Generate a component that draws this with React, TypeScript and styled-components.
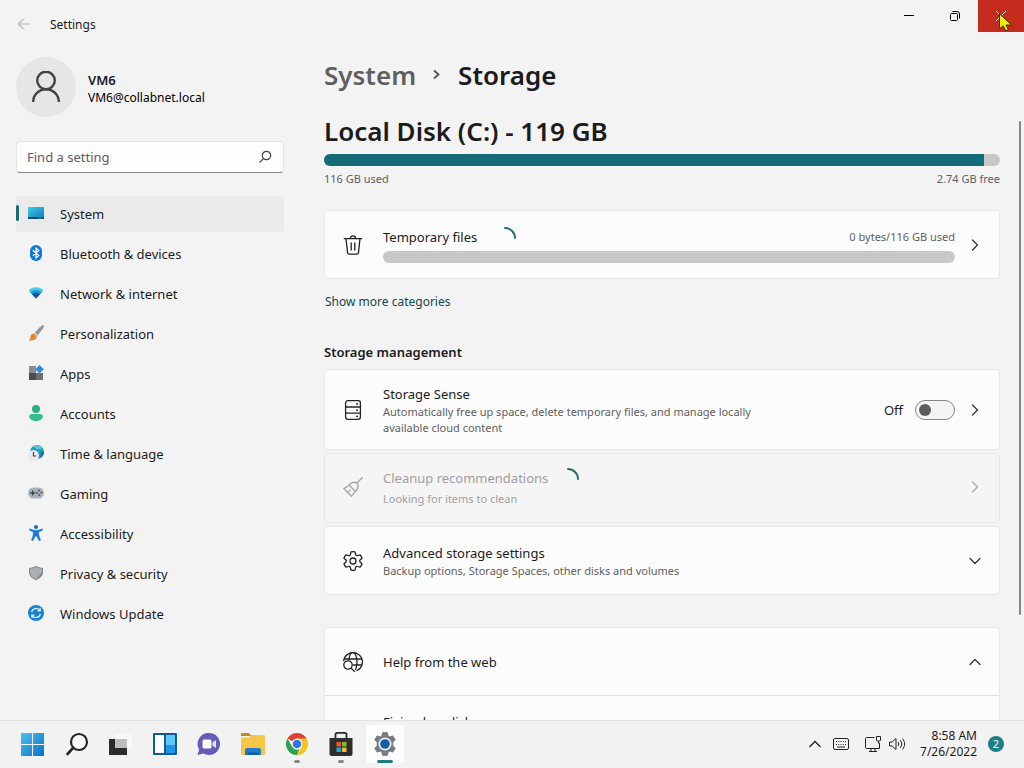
import React from "react";
import styled, { createGlobalStyle } from "styled-components";

const GlobalStyle = createGlobalStyle`
  *, *::before, *::after { box-sizing: border-box; }
  html, body { margin: 0; height: 100%; }
  body {
    background: #f3f3f3;
    color: #1b1b1b;
    font-family: "Noto Sans", "Open Sans", sans-serif;
    font-size: 13px;
    line-height: 20px;
    overflow: hidden;
  }
  h1, h2, h3, p { margin: 0; }
  button, input { font: inherit; color: inherit; }
  button { border: 0; padding: 0; background: none; text-align: left; }
  svg { display: block; flex: none; }
`;

const Desktop = styled.div`
  height: 100vh;
  display: flex;
  flex-direction: column;
`;

const Window = styled.div`
  flex: 1;
  min-height: 0;
  display: flex;
  flex-direction: column;
  overflow: hidden;
`;

const TitleBar = styled.header`
  flex: none;
  height: 48px;
  display: flex;
  align-items: flex-start;
`;

const BackButton = styled.button`
  width: 16px;
  height: 48px;
  margin: 0 18px 0 16px;
  display: flex;
  align-items: center;
`;

const AppName = styled.span`
  flex: 1;
  font-size: 12px;
  line-height: 50px;
`;

const CaptionButton = styled.button<{ $danger?: boolean }>`
  position: relative;
  width: 46px;
  height: 32px;
  display: flex;
  align-items: center;
  justify-content: center;
  background: ${(p) => (p.$danger ? "#c42b1c" : "transparent")};
`;

const Pointer = styled.svg`
  position: absolute;
  left: 20px;
  top: 13px;
`;

const Body = styled.div`
  flex: 1;
  min-height: 0;
  display: flex;
`;

const Sidebar = styled.aside`
  flex: none;
  width: 308px;
  padding: 9px 24px 0 16px;
  display: flex;
  flex-direction: column;
`;

const Account = styled.div`
  display: flex;
  align-items: center;
  gap: 12px;
`;

const Avatar = styled.div`
  width: 60px;
  height: 60px;
  border-radius: 50%;
  background: #e6e6e6;
  display: flex;
  align-items: center;
  justify-content: center;
`;

const AccountText = styled.div`
  padding-top: 4px;
  line-height: 18px;
`;

const AccountName = styled.div`
  font-weight: 600;
`;

const AccountMail = styled.div`
  font-size: 12px;
  color: #000;
`;

const SearchBox = styled.label`
  height: 32px;
  margin: 24px 0 23px;
  padding: 0 11px 0 10px;
  display: flex;
  align-items: center;
  background: #fdfdfd;
  border: 1px solid #e5e5e5;
  border-bottom-color: #868686;
  border-radius: 4px;
`;

const SearchInput = styled.input`
  flex: 1;
  min-width: 0;
  padding: 0;
  border: 0;
  outline: 0;
  background: none;
  &::placeholder { color: #5f5f5f; opacity: 1; }
`;

const Nav = styled.nav`
  display: flex;
  flex-direction: column;
  gap: 4px;
`;

const NavItem = styled.a<{ $active?: boolean }>`
  height: 36px;
  padding-right: 12px;
  display: flex;
  align-items: center;
  border-radius: 4px;
  color: inherit;
  text-decoration: none;
  background: ${(p) => (p.$active ? "#eaeaea" : "transparent")};
  &::before {
    content: "";
    width: 3px;
    height: 16px;
    margin: 0 9px 2px 0;
    border-radius: 2px;
    background: ${(p) => (p.$active ? "#1a6a6c" : "transparent")};
  }
  svg { margin: 0 16px 2px 0; }
`;

const Content = styled.main`
  flex: 1;
  min-width: 0;
  padding: 7px 0 0 16px;
  display: flex;
  flex-direction: column;
`;

const Breadcrumb = styled.div`
  flex: none;
  display: flex;
  align-items: center;
  gap: 13px;
  font-size: 26px;
  font-weight: 600;
  line-height: 40px;
`;

const Crumb = styled.a`
  color: #5f5f5f;
  text-decoration: none;
`;

const PageTitle = styled.h1`
  font: inherit;
`;

const Page = styled.div`
  flex: 1;
  min-height: 0;
  overflow: hidden;
  padding: 16px 19px 0 0;
`;

const DriveTitle = styled.h2`
  font-size: 26px;
  font-weight: 600;
  line-height: 40px;
`;

const Meter = styled.div`
  height: 12px;
  margin-top: 3px;
  border-radius: 6px;
  background: #c8c8c8;
  overflow: hidden;
`;

const MeterFill = styled.div`
  height: 100%;
  background: #166b78;
`;

const Spread = styled.div`
  display: flex;
  justify-content: space-between;
  align-items: center;
`;

const Caption = styled.span<{ $faded?: boolean }>`
  display: block;
  max-width: 400px;
  font-size: 11px;
  line-height: 16px;
  color: ${(p) => (p.$faded ? "#a0a0a0" : "#606060")};
`;

const MeterLabels = styled(Spread)`
  margin: 5px 0 23px;
`;

const Card = styled.div<{ $faded?: boolean }>`
  width: 100%;
  min-height: ${(p) => (p.$faded ? 70 : 69)}px;
  padding: ${(p) => (p.$faded ? "12px 16px 14px 18px" : "13px 16px 13px 18px")};
  display: flex;
  align-items: center;
  gap: 20px;
  border: 1px solid #e7e7e7;
  border-radius: 4px;
  background: ${(p) => (p.$faded ? "#f5f5f5" : "#fcfcfc")};
  color: ${(p) => (p.$faded ? "#a0a0a0" : "inherit")};
`;

const CardText = styled.span<{ $loose?: boolean }>`
  flex: 1;
  min-width: 0;
  display: flex;
  flex-direction: column;
  gap: ${(p) => (p.$loose ? 3 : 0)}px;
`;

const CardTitle = styled.span<{ $gap?: number }>`
  display: flex;
  align-items: center;
  gap: ${(p) => p.$gap ?? 0}px;
  height: 20px;
`;

const CardEnd = styled.span`
  display: flex;
  align-items: center;
  gap: 12px;
`;

const WideCard = styled(Card)`
  gap: 12px;
  > svg:first-child { margin-right: 8px; }
  ${Meter} { margin-top: 4px; }
`;

const MoreLink = styled.a`
  display: inline-block;
  margin: 13px 1px 0;
  font-size: 12px;
  color: #14484c;
  text-decoration: none;
`;

const SectionTitle = styled.h3`
  margin: 30px 0 7px;
  font-size: 13px;
  font-weight: 600;
`;

const CardList = styled.div`
  display: flex;
  flex-direction: column;
  gap: 3px;
  ${Card}:first-child { min-height: 81px; }
`;

const SwitchLabel = styled.label`
  display: flex;
  align-items: center;
  gap: 12px;
`;

const Switch = styled.input`
  appearance: none;
  width: 40px;
  height: 20px;
  margin: 0;
  padding: 3px;
  border: 1px solid #868686;
  border-radius: 10px;
  background: #f4f4f4;
  &::before {
    content: "";
    display: block;
    width: 12px;
    height: 12px;
    border-radius: 50%;
    background: #5c5c5c;
  }
`;

const HelpGroup = styled.section`
  margin-top: 32px;
  border: 1px solid #e7e7e7;
  border-radius: 4px;
  background: #fcfcfc;
`;

const HelpHeader = styled.button`
  width: 100%;
  height: 68px;
  padding: 0 16px 0 18px;
  display: flex;
  align-items: center;
  gap: 20px;
  border-bottom: 1px solid #e0e0e0;
`;

const HelpLink = styled.a`
  display: block;
  padding: 16px 58px;
  color: inherit;
  text-decoration: none;
`;

const ScrollRow = styled.div`
  flex: 1;
  min-height: 0;
  display: flex;
`;

const ScrollThumb = styled.div`
  flex: none;
  width: 2px;
  height: 79%;
  margin: 26px 3px 0 0;
  border-radius: 1px;
  background: #868686;
`;

const Taskbar = styled.footer`
  flex: none;
  height: 48px;
  padding: 0 20px 2px 14px;
  display: flex;
  align-items: center;
  justify-content: space-between;
  border-top: 1px solid #e2e2e2;
  background: #f2f2f2;
`;

const TaskGroup = styled.div`
  display: flex;
  gap: 6px;
`;

const TaskButton = styled.button<{ $open?: boolean; $active?: boolean }>`
  position: relative;
  width: 38px;
  height: 38px;
  display: flex;
  align-items: center;
  justify-content: center;
  border-radius: 4px;
  background: ${(p) => (p.$active ? "#fdfdfd" : "transparent")};
  &::after {
    content: "";
    position: absolute;
    bottom: 0;
    width: ${(p) => (p.$active ? 16 : 6)}px;
    height: 3px;
    border-radius: 2px;
    background: ${(p) => (p.$active ? "#1f7a82" : p.$open ? "#8a8a8a" : "transparent")};
  }
`;

const Tray = styled.div`
  display: flex;
  align-items: center;
`;

const TrayButton = styled.button<{ $wide?: boolean }>`
  margin-right: ${(p) => (p.$wide ? 16 : 8)}px;
  display: flex;
  align-items: center;
`;

const Clock = styled.div`
  min-width: 56px;
  margin: 0 11px 0 7px;
  font-size: 12px;
  line-height: 16px;
  text-align: right;
`;

const Badge = styled.button`
  width: 16px;
  height: 16px;
  border-radius: 50%;
  background: #1f7f88;
  color: #fff;
  font-size: 11px;
  line-height: 16px;
  text-align: center;
`;

type ChevronDir = "right" | "down" | "up";
const chevronPaths: Record<ChevronDir, string> = {
  right: "M5.5 3 10.5 8 5.5 13",
  down: "M3 5.5 8 10.5 13 5.5",
  up: "M3 10.5 8 5.5 13 10.5",
};

const Chevron = ({ dir = "right", color = "#333" }: { dir?: ChevronDir; color?: string }) => (
  <svg width="16" height="16" viewBox="0 0 16 16" fill="none" stroke={color} strokeWidth="1.3" strokeLinecap="round" strokeLinejoin="round">
    <path d={chevronPaths[dir]} />
  </svg>
);

const CrumbChevron = () => (
  <svg width="16" height="16" viewBox="0 0 16 16" fill="none" stroke="#555" strokeWidth="1.8">
    <path d="M5 3.5 9.5 7.5 5 11.5" />
  </svg>
);

const Spinner = () => (
  <svg width="24" height="24" viewBox="0 0 24 24" fill="none" stroke="#24706c" strokeWidth="2" strokeLinecap="round">
    <path d="M12 3a10 10 0 0 1 10 10" />
  </svg>
);

const Line = ({ children, color = "#222" }: { children: React.ReactNode; color?: string }) => (
  <svg width="20" height="20" viewBox="0 0 20 20" fill="none" stroke={color} strokeWidth="1.3" strokeLinecap="round" strokeLinejoin="round">
    {children}
  </svg>
);

const TrashIcon = () => (
  <Line>
    <path d="M1.200 3.600h17.600M7.400 3.400a2.600 2.600 0 0 1 5.200 0M3 3.800l1.500 13.600a2 2 0 0 0 2 1.800h7a2 2 0 0 0 2-1.800L17 3.800M8.200 8v7M11.800 8v7" />
  </Line>
);

const DrivesIcon = () => (
  <Line>
    <rect x="2.600" y=".7" width="14.800" height="18.600" rx="2.200" />
    <path d="M2.600 7h14.800M2.600 13.200h14.800" />
    <path d="M14 4h.1M14 10.200h.1M14 16.400h.1" strokeWidth="1.800" />
  </Line>
);

const BroomIcon = () => (
  <Line color="#a3a3a3">
    <path d="M19.200.8 14 6M6.200 8.200C8.200 5.200 12 4.400 14 6.200s1.200 5.600-1.600 8.200zM6.200 8.200.8 11.600 8.400 19.200 12.400 14.400M4.600 15.400l2.600-2.200" />
  </Line>
);

const GearIcon = () => (
  <Line>
    <circle cx="10" cy="10" r="3" />
    <path d="M8 .9a9.300 9.300 0 0 1 4 0l.5 2.200a1.700 1.700 0 0 0 2.300 1.400l2.200-.7a9.300 9.300 0 0 1 2 3.400L17.300 8.800a1.700 1.700 0 0 0 0 2.400L19 12.800a9.300 9.300 0 0 1-2 3.400l-2.200-.7a1.700 1.700 0 0 0-2.300 1.400l-.5 2.200a9.300 9.300 0 0 1-4 0l-.5-2.200a1.700 1.700 0 0 0-2.300-1.400l-2.200.7a9.300 9.300 0 0 1-2-3.400l1.700-1.600a1.700 1.700 0 0 0 0-2.400L1 7.200a9.300 9.300 0 0 1 2-3.400l2.200.7a1.700 1.700 0 0 0 2.300-1.400z" />
  </Line>
);

const GlobeSearchIcon = () => (
  <Line>
    <path d="M.7 8.600A9.400 9.400 0 1 1 14 18.500M1.400 7h17.200M10.500 13h8.200M6 7.500C6.300 3.400 8 .6 10 .6s4 3.800 4 9.400c0 3-.4 5.500-1.300 7.300" />
    <circle cx="5" cy="13" r="4.200" />
    <path d="m8.200 16.200 3.400 3.400" />
  </Line>
);

const NavSvg = ({ children }: { children: React.ReactNode }) => (
  <svg width="16" height="16" viewBox="0 0 16 16">{children}</svg>
);

const navItems: { label: string; icon: React.ReactNode; active?: boolean }[] = [
  {
    label: "System",
    active: true,
    icon: (
      <NavSvg>
        <defs>
          <linearGradient id="sys" x1="0" y1="0" x2="1" y2="1">
            <stop stopColor="#38cdea" />
            <stop offset="1" stopColor="#1179b8" />
          </linearGradient>
        </defs>
        <rect y="2" width="16" height="12" rx="1" fill="url(#sys)" />
        <path d="M0 12h16v1a1 1 0 0 1-1 1H1a1 1 0 0 1-1-1z" fill="#0b4570" />
        <path d="M10.500 13h1M12.500 13h1" stroke="#8fd4f4" />
      </NavSvg>
    ),
  },
  {
    label: "Bluetooth & devices",
    icon: (
      <NavSvg>
        <rect x="2" width="12" height="16" rx="6" fill="#0f78dd" />
        <path d="m4.800 5.200 6 5.400L8 13V3l2.800 2.500-6 5.300" fill="none" stroke="#fff" strokeWidth="1.200" />
      </NavSvg>
    ),
  },
  {
    label: "Network & internet",
    icon: (
      <NavSvg>
        <path d="M.5 5.500C4.500 1.300 11.500 1.300 15.500 5.500L8 13.500z" fill="#50c9ec" />
        <path d="M2.200 7.300c3.300-3.200 8.300-3.200 11.600 0L8 13.500z" fill="#239bd3" />
        <path d="M4 9.300c2.400-2.200 5.600-2.200 8 0l-4 4.200z" fill="#1455a5" />
      </NavSvg>
    ),
  },
  {
    label: "Personalization",
    icon: (
      <NavSvg>
        <path d="M15.600.4c.8.9-.2 2.400-1.200 3.900L9 11.200 6 8.400 12.200 1.800C13.600.5 15-.2 15.600.4z" fill="#8a9aa0" />
        <path d="m7 7.400 2.900 2.700L8.700 11.500 5.800 8.700z" fill="#c9ccce" />
        <path d="M5.500 8.500 8.800 11.500c-.2 3-4 4.600-8.200 3.900 2-1.100 1.500-2.500 2-4.400.4-1.500 1.700-2.500 2.900-2.500z" fill="#e98526" />
      </NavSvg>
    ),
  },
  {
    label: "Apps",
    icon: (
      <NavSvg>
        <rect x="1" y="1" width="7" height="7" fill="#8a8d90" />
        <rect x="1" y="8" width="7" height="7" fill="#4a4c4f" />
        <rect x="8" y="8" width="7" height="7" fill="#6d7073" />
        <path d="m11.500 0 4.300 4.300-4.300 4.300-4.300-4.300z" fill="#2c8ddd" />
      </NavSvg>
    ),
  },
  {
    label: "Accounts",
    icon: (
      <NavSvg>
        <circle cx="8" cy="4" r="4" fill="#29ae83" />
        <path d="M3.500 9h9c1.300 0 2.300 1 2.300 2.300C14.800 14.500 11.500 16 8 16s-6.800-1.500-6.800-4.700C1.200 10 2.200 9 3.500 9z" fill="#35bd90" />
      </NavSvg>
    ),
  },
  {
    label: "Time & language",
    icon: (
      <NavSvg>
        <circle cx="9" cy="7" r="7" fill="#1f9dbb" />
        <path d="M5 1.500C8-.3 12-.3 14.500 3c-2 .5-2.500 1.500-4.500 1.500S7.500 3 5 1.500z" fill="#57c8d6" />
        <path d="M13 7l3-1c0 4-2 6-4 7z" fill="#1474ad" />
        <circle cx="5.500" cy="10.500" r="5.500" fill="#eee6ea" />
        <path d="M5.500 7v4H8" fill="none" stroke="#454a50" strokeWidth="1.200" />
      </NavSvg>
    ),
  },
  {
    label: "Gaming",
    icon: (
      <NavSvg>
        <rect y="2.500" width="16" height="11" rx="5.500" fill="#a9b0b8" />
        <path d="M2.200 8h5M4.700 5.500v5" stroke="#3c4148" strokeWidth="1.300" />
        <g fill="#4a5058">
          <circle cx="11" cy="5.500" r=".9" />
          <circle cx="13.400" cy="7.500" r=".9" />
          <circle cx="9" cy="8" r=".9" />
          <circle cx="11.200" cy="10" r=".9" />
        </g>
      </NavSvg>
    ),
  },
  {
    label: "Accessibility",
    icon: (
      <NavSvg>
        <circle cx="8" cy="2" r="2" fill="#1b6fc0" />
        <path d="M1.800 3.800 6 5.200h4l4.200-1.400.5 1.400-4 1.700.2 3.300 1.700 5-1.600.6L8.500 11h-1L5 15.800l-1.600-.6 1.700-5 .2-3.300-4-1.700z" fill="#1b7bd2" stroke="#1b7bd2" strokeWidth=".4" />
      </NavSvg>
    ),
  },
  {
    label: "Privacy & security",
    icon: (
      <NavSvg>
        <path d="M8 .8c2 1.400 4.500 2 7 2V7c0 4-3 6.500-7 8.200C4 13.500 1 11 1 7V2.800c2.500 0 5-.6 7-2z" fill="#84888b" />
        <path d="M8 2c1.800 1.200 4 1.700 6 1.700V7L8 14C4.500 12.500 2 10.400 2 7V3.700c2 0 4.200-.5 6-1.700z" fill="#abafb2" />
      </NavSvg>
    ),
  },
  {
    label: "Windows Update",
    icon: (
      <NavSvg>
        <circle cx="8" cy="8" r="8" fill="#1681d2" />
        <path d="M3.600 7A4.600 4.600 0 0 1 12 5.700M12.400 9A4.600 4.600 0 0 1 4 10.300M12.200 3.200v2.700H9.500M3.800 12.800v-2.700h2.700" fill="none" stroke="#dff3ff" strokeWidth="1.300" />
      </NavSvg>
    ),
  },
];

const StartIcon = () => (
  <svg width="24" height="24" viewBox="0 0 24 24">
    <defs>
      <linearGradient id="win" x1="0" y1="0" x2="24" y2="24" gradientUnits="userSpaceOnUse">
        <stop stopColor="#4cc2ee" />
        <stop offset="1" stopColor="#0b6fc9" />
      </linearGradient>
    </defs>
    <path d="M0 1h11v11H0zM12 1h11v11H12zM0 13h11v11H0zM12 13h11v11H12z" fill="url(#win)" />
  </svg>
);

const TaskSearchIcon = () => (
  <svg width="24" height="24" viewBox="0 0 24 24">
    <circle cx="14" cy="10" r="8" fill="#fafafa" stroke="#262626" strokeWidth="2.200" />
    <path d="m8 16-5.500 6" stroke="#262626" strokeWidth="2.600" strokeLinecap="round" />
  </svg>
);

const TaskViewIcon = () => (
  <svg width="24" height="24" viewBox="0 0 24 24">
    <rect x="6" y="2" width="17" height="14" rx="1" fill="#f8f8f8" />
    <path d="M0 7h18v16H1a1 1 0 0 1-1-1z" fill="#2b2b2b" />
    <rect x="6" y="7" width="12" height="9" fill="#bdbdbd" />
  </svg>
);

const WidgetsIcon = () => (
  <svg width="24" height="24" viewBox="0 0 24 24">
    <rect y="1" width="24" height="22" rx="1" fill="#155a92" />
    <rect x="2" y="3" width="9" height="18" fill="#fbfdff" />
    <rect x="13" y="3" width="9" height="10" fill="#5ccbfb" />
    <rect x="13" y="13" width="9" height="8" fill="#1e97ea" />
  </svg>
);

const ChatIcon = () => (
  <svg width="24" height="24" viewBox="0 0 24 24">
    <path d="M12 1A11 11 0 1 1 6.500 21.500L.5 23l1.600-5.500A11 11 0 0 1 12 1z" fill="#665bb9" />
    <rect x="5.500" y="7.500" width="9" height="9" rx="1.500" fill="#fff" />
    <path d="m15.500 10.500 3.500-2.500v8l-3.500-2.500z" fill="#e5e3fa" />
  </svg>
);

const FolderIcon = () => (
  <svg width="24" height="24" viewBox="0 0 24 24">
    <path d="M0 2a1 1 0 0 1 1-1h7l2.500 3H0z" fill="#c28b22" />
    <path d="M0 5.500h8L10.500 3H23a1 1 0 0 1 1 1v18a1 1 0 0 1-1 1H1a1 1 0 0 1-1-1z" fill="#f5c749" />
    <path d="M4 23v-4.500A2.500 2.500 0 0 1 6.500 16h11a2.500 2.500 0 0 1 2.500 2.500V23z" fill="#1e7bc9" />
    <path d="M6.500 20.500h11V23h-11z" fill="#125a9c" />
  </svg>
);

const ChromeIcon = () => (
  <svg width="24" height="24" viewBox="0 0 24 24">
    <path d="M12 12 2.470 6.500A11 11 0 0 1 21.530 6.500z" fill="#dc4334" />
    <path d="M12 6.500h9.530A11 11 0 0 1 12 23l4.800-8.300z" fill="#fbc116" />
    <path d="M2.470 6.500 7.200 14.800 12 17.500l2.500-.5L12 23A11 11 0 0 1 2.470 6.500z" fill="#2da24e" />
    <circle cx="12" cy="12" r="5.500" fill="#fff" />
    <circle cx="12" cy="12" r="4.300" fill="#2c78e4" />
  </svg>
);

const StoreIcon = () => (
  <svg width="24" height="24" viewBox="0 0 24 24">
    <path d="M6.500 7V2A1.500 1.500 0 0 1 8 .9h8A1.500 1.500 0 0 1 17.500 2v5" fill="none" stroke="#2b2b2b" strokeWidth="1.800" />
    <path d="M.5 6h23v16a2 2 0 0 1-2 2h-19a2 2 0 0 1-2-2z" fill="#2e2e2e" />
    <path d="M7.500 10H12v4.500H7.500z" fill="#ea5a32" />
    <path d="M13 10h4.500v4.500H13z" fill="#86b92f" />
    <path d="M7.500 15.500H12V20H7.500z" fill="#25a5e5" />
    <path d="M13 15.500h4.500V20H13z" fill="#f5bd2c" />
  </svg>
);

const TaskSettingsIcon = () => (
  <svg width="24" height="24" viewBox="0 0 24 24">
    <path
      d="M9.700.7h4.600l.7 3.200 1.800 1 3.100-1 2.300 4-2.400 2.100v4l2.400 2.100-2.300 4-3.100-1-1.800 1-.7 3.200H9.700L9 20.100l-1.800-1-3.100 1-2.300-4L4.200 14v-4L1.800 7.900l2.300-4 3.100 1 1.800-1z"
      fill="#777c82"
      stroke="#777c82"
      strokeLinejoin="round"
    />
    <circle cx="12" cy="12" r="6.500" fill="#eef4f9" />
    <circle cx="12" cy="12" r="4.800" fill="#125ea8" />
  </svg>
);

const tasks: { label: string; icon: React.ReactNode; open?: boolean; active?: boolean }[] = [
  { label: "Start", icon: <StartIcon /> },
  { label: "Search", icon: <TaskSearchIcon /> },
  { label: "Task view", icon: <TaskViewIcon /> },
  { label: "Widgets", icon: <WidgetsIcon /> },
  { label: "Chat", icon: <ChatIcon /> },
  { label: "File Explorer", icon: <FolderIcon /> },
  { label: "Chrome", icon: <ChromeIcon />, open: true },
  { label: "Microsoft Store", icon: <StoreIcon />, open: true },
  { label: "Settings", icon: <TaskSettingsIcon />, active: true },
];

const WindowTitleBar = () => (
  <TitleBar>
    <BackButton aria-label="Back">
      <svg width="16" height="16" viewBox="0 0 16 16" fill="none" stroke="#b8b8b8" strokeWidth="1.200">
        <path d="M14.500 8h-12M7.500 3 2.200 8l5.300 5" />
      </svg>
    </BackButton>
    <AppName>Settings</AppName>
    <CaptionButton aria-label="Minimize">
      <svg width="10" height="10" viewBox="0 0 10 10"><path d="M0 4h10v1H0z" /></svg>
    </CaptionButton>
    <CaptionButton aria-label="Restore">
      <svg width="10" height="10" viewBox="0 0 10 10" fill="none" stroke="#000">
        <rect x=".5" y="2.500" width="7" height="7" rx="1" />
        <path d="M2.500.5H7A2.500 2.500 0 0 1 9.500 3v4.500" />
      </svg>
    </CaptionButton>
    <CaptionButton $danger aria-label="Close">
      <svg width="10" height="10" viewBox="0 0 10 10" stroke="#fff"><path d="m0 0 10 10M10 0 0 10" /></svg>
      <Pointer width="16" height="19" viewBox="0 0 16 19">
        <path d="M1.500.8v15l3.600-3 2.600 5 2.600-1.300L8 12h5.500z" fill="#e6f400" stroke="#4a2a08" />
      </Pointer>
    </CaptionButton>
  </TitleBar>
);

const SettingsNav = () => (
  <Sidebar>
    <Account>
      <Avatar>
        <svg width="30" height="32" viewBox="0 0 30 32" fill="none" stroke="#444" strokeWidth="2.400">
          <circle cx="15" cy="9.500" r="8.800" />
          <path d="M2.200 31a12.800 12.800 0 0 1 25.600 0" />
        </svg>
      </Avatar>
      <AccountText>
        <AccountName>VM6</AccountName>
        <AccountMail>VM6@collabnet.local</AccountMail>
      </AccountText>
    </Account>
    <SearchBox>
      <SearchInput type="text" placeholder="Find a setting" aria-label="Find a setting" />
      <svg width="14" height="14" viewBox="0 0 14 14" fill="none" stroke="#444" strokeWidth="1.200">
        <circle cx="8.500" cy="5.500" r="4.200" />
        <path d="M5.400 8.600 1.500 12.500" />
      </svg>
    </SearchBox>
    <Nav>
      {navItems.map((item) => (
        <NavItem key={item.label} href="#" $active={item.active}>
          {item.icon}
          {item.label}
        </NavItem>
      ))}
    </Nav>
  </Sidebar>
);

const StoragePage = () => (
  <Content>
    <Breadcrumb>
      <Crumb href="#">System</Crumb>
      <CrumbChevron />
      <PageTitle>Storage</PageTitle>
    </Breadcrumb>
    <ScrollRow>
      <Page>
        <DriveTitle>Local Disk (C:) - 119 GB</DriveTitle>
        <Meter role="progressbar" aria-label="Disk usage" aria-valuenow={98}>
          <MeterFill style={{ width: "97.7%" }} />
        </Meter>
        <MeterLabels>
          <Caption>116 GB used</Caption>
          <Caption>2.74 GB free</Caption>
        </MeterLabels>

        <WideCard as="button">
          <TrashIcon />
          <CardText>
            <Spread as="span">
              <CardTitle $gap={16}>Temporary files <Spinner /></CardTitle>
              <Caption>0 bytes/116 GB used</Caption>
            </Spread>
            <Meter as="span" role="progressbar" aria-label="Temporary files usage" aria-valuenow={0} />
          </CardText>
          <Chevron />
        </WideCard>
        <MoreLink href="#">Show more categories</MoreLink>

        <SectionTitle>Storage management</SectionTitle>
        <CardList>
          <Card>
            <DrivesIcon />
            <CardText>
              <CardTitle>Storage Sense</CardTitle>
              <Caption>Automatically free up space, delete temporary files, and manage locally available cloud content</Caption>
            </CardText>
            <CardEnd>
              <SwitchLabel>
                Off
                <Switch type="checkbox" role="switch" aria-label="Storage Sense" />
              </SwitchLabel>
              <button aria-label="Open Storage Sense"><Chevron /></button>
            </CardEnd>
          </Card>
          <Card as="button" disabled $faded>
            <BroomIcon />
            <CardText $loose>
              <CardTitle $gap={8}>Cleanup recommendations <Spinner /></CardTitle>
              <Caption $faded>Looking for items to clean</Caption>
            </CardText>
            <Chevron color="#aaa" />
          </Card>
          <Card as="button">
            <GearIcon />
            <CardText>
              <CardTitle>Advanced storage settings</CardTitle>
              <Caption>Backup options, Storage Spaces, other disks and volumes</Caption>
            </CardText>
            <Chevron dir="down" />
          </Card>
        </CardList>

        <HelpGroup>
          <HelpHeader aria-expanded="true">
            <GlobeSearchIcon />
            <CardText>Help from the web</CardText>
            <Chevron dir="up" />
          </HelpHeader>
          <HelpLink href="#">Fixing low disk space</HelpLink>
        </HelpGroup>
      </Page>
      <ScrollThumb />
    </ScrollRow>
  </Content>
);

const SystemTaskbar = () => (
  <Taskbar>
    <TaskGroup>
      {tasks.map((task) => (
        <TaskButton key={task.label} aria-label={task.label} $open={task.open} $active={task.active}>
          {task.icon}
        </TaskButton>
      ))}
    </TaskGroup>
    <Tray>
      <TrayButton aria-label="Show hidden icons">
        <svg width="20" height="16" viewBox="0 0 20 16" fill="none" stroke="#222" strokeWidth="1.300">
          <path d="m4.500 11 5.500-5.500 5.500 5.500" />
        </svg>
      </TrayButton>
      <TrayButton $wide aria-label="Touch keyboard">
        <svg width="16" height="16" viewBox="0 0 16 16" fill="none" stroke="#222">
          <rect x=".5" y="2.500" width="15" height="11" rx="1.500" />
          <path d="M3 5.500h10M3 8.500h10" strokeDasharray="1 1.250" />
          <path d="M4 11h8" />
        </svg>
      </TrayButton>
      <TrayButton aria-label="Network">
        <svg width="16" height="16" viewBox="0 0 16 16" fill="none" stroke="#222">
          <path d="M9.500 1.500h-8a1 1 0 0 0-1 1v9a1 1 0 0 0 1 1h13V7M6 12.500v3M10 12.500v3M4 15.500h8" />
          <path d="M11.500.5h4V4a1 1 0 0 1-1 1h-2a1 1 0 0 1-1-1zM13.500 5v2.500" />
        </svg>
      </TrayButton>
      <TrayButton aria-label="Volume">
        <svg width="16" height="16" viewBox="0 0 16 16" fill="none" stroke="#222" strokeLinejoin="round">
          <path d="M.5 6h2.700L7 2.500v11L3.200 10H.5zM9 6c.9 1.200.9 2.800 0 4M11.200 4.200c2 2.200 2 5.400 0 7.600M13.300 2.500c3 3.200 3 7.800 0 11" />
        </svg>
      </TrayButton>
      <Clock>
        8:58 AM
        <br />
        7/26/2022
      </Clock>
      <Badge aria-label="2 notifications">2</Badge>
    </Tray>
  </Taskbar>
);

export default function App() {
  return (
    <Desktop>
      <GlobalStyle />
      <Window>
        <WindowTitleBar />
        <Body>
          <SettingsNav />
          <StoragePage />
        </Body>
      </Window>
      <SystemTaskbar />
    </Desktop>
  );
}
